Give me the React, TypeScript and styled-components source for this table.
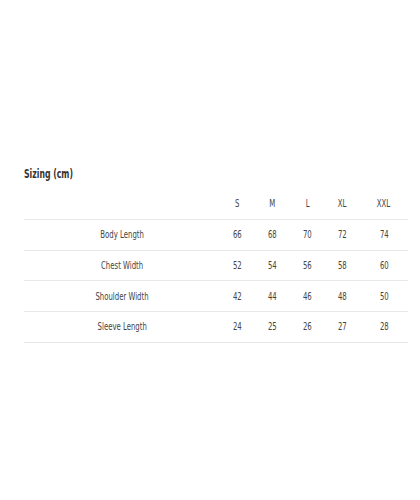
import React from "react";
import styled, { createGlobalStyle } from "styled-components";

const Global = createGlobalStyle`
  html, body { margin: 0; padding: 0; background: #fff; }
  body { font-family: "DejaVu Sans Condensed", "Liberation Sans", sans-serif; }
`;

const Page = styled.div`
  width: 420px;
  height: 500px;
  box-sizing: border-box;
  padding: 166px 12px 0 24px;
  display: flex;
  flex-direction: column;
`;

const Heading = styled.h2`
  margin: 0;
  font-size: 12.5px;
  line-height: 16px;
  font-weight: 700;
  color: #333;
  transform: scaleX(0.69);
  transform-origin: left center;
  white-space: nowrap;
`;

const Table = styled.div`
  margin-top: 7px;
  display: grid;
  grid-template-columns: 196px 35px 35px 35px 35px 48px;
  width: 384px;
`;

const Cell = styled.div`
  height: 30.75px;
  box-sizing: border-box;
  border-bottom: 1px solid #e8e8e8;
  display: flex;
  align-items: center;
  justify-content: center;
  font-size: 11px;
  color: #444;
`;

const Text = styled.span`
  display: inline-block;
  white-space: nowrap;
  transform: scaleX(0.7);
`;

const sizes = ["S", "M", "L", "XL", "XXL"];
const rows: [string, number[]][] = [
  ["Body Length", [66, 68, 70, 72, 74]],
  ["Chest Width", [52, 54, 56, 58, 60]],
  ["Shoulder Width", [42, 44, 46, 48, 50]],
  ["Sleeve Length", [24, 25, 26, 27, 28]],
];

export default function App() {
  return (
    <>
      <Global />
      <Page>
        <Heading>Sizing (cm)</Heading>
        <Table>
          <Cell />
          {sizes.map((s) => (
            <Cell key={s}>
              <Text>{s}</Text>
            </Cell>
          ))}
          {rows.map(([label, vals]) => (
            <React.Fragment key={label}>
              <Cell>
                <Text>{label}</Text>
              </Cell>
              {vals.map((v, i) => (
                <Cell key={i}>
                  <Text>{v}</Text>
                </Cell>
              ))}
            </React.Fragment>
          ))}
        </Table>
      </Page>
    </>
  );
}
